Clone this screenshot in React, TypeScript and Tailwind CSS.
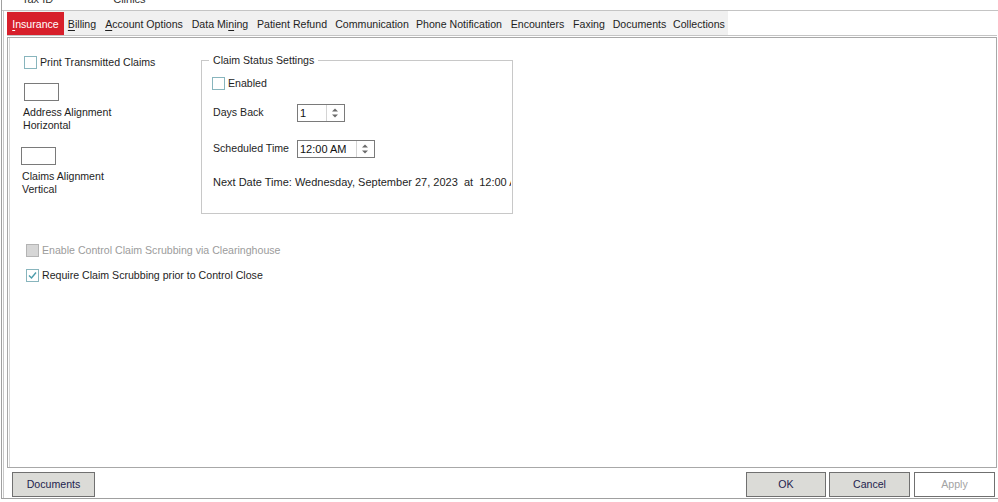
import React from "react";

const tabs = [
  { label: "Insurance", u: 0, w: "w-[57px]" },
  { label: "Billing", u: 0, w: "w-[36px]" },
  { label: "Account Options", u: 0, w: "w-[88px]" },
  { label: "Data Mining", u: 7, w: "w-[64px]" },
  { label: "Patient Refund", u: -1, w: "w-[80px]" },
  { label: "Communication", u: -1, w: "w-[80px]" },
  { label: "Phone Notification", u: -1, w: "w-[94px]" },
  { label: "Encounters", u: -1, w: "w-[63px]" },
  { label: "Faxing", u: -1, w: "w-[40px]" },
  { label: "Documents", u: -1, w: "w-[61px]" },
  { label: "Collections", u: -1, w: "w-[58px]" },
];

function Mnemonic({ label, u }: { label: string; u: number }) {
  if (u < 0) return <>{label}</>;
  return (
    <>
      {label.slice(0, u)}
      <span className="underline underline-offset-2">{label[u]}</span>
      {label.slice(u + 1)}
    </>
  );
}

function CheckBox({ checked, disabled }: { checked?: boolean; disabled?: boolean }) {
  return (
    <div
      className={
        disabled
          ? "h-[13px] w-[13px] shrink-0 border border-[#b4b4b4] bg-[#d6d6d6]"
          : "h-[13px] w-[13px] shrink-0 border border-[#88b5bd] bg-white"
      }
    >
      {checked && (
        <svg width="11" height="11" viewBox="0 0 11 11">
          <path d="M2 5.5 L4.5 8 L9 2.5" fill="none" stroke="#4b9cab" strokeWidth="1.4" />
        </svg>
      )}
    </div>
  );
}

function Spin({ value, w, sep }: { value: string; w: string; sep: string }) {
  return (
    <div className={`flex h-[18px] ${w} border border-[#7a7a7a] bg-white`}>
      <div className={`${sep} pl-[2px] text-[11px] leading-[16px] text-[#111]`}>{value}</div>
      <div className="flex-1 border-l border-[#d4d4d4]">
        <svg width="17" height="16" viewBox="0 0 17 16">
          <polygon points="5,6.5 11,6.5 8,3.5" fill="#6a6a6a" />
          <polygon points="5,9.5 11,9.5 8,12.5" fill="#6a6a6a" />
        </svg>
      </div>
    </div>
  );
}

function Btn({ label, w, disabled }: { label: string; w: string; disabled?: boolean }) {
  return (
    <div
      className={
        disabled
          ? `flex h-[25px] ${w} items-center justify-center border border-[#707070] bg-white text-[#a3a3a3]`
          : `flex h-[25px] ${w} items-center justify-center border border-[#707070] bg-[#dbdbd7] text-[#23234e]`
      }
    >
      {label}
    </div>
  );
}

export default function App() {
  return (
    <div className="h-[502px] w-[998px] overflow-hidden bg-white font-['Liberation_Sans',Arial,sans-serif] text-[10.6px] text-[#1e1e1e]">
      <div className="ml-px flex h-[499px] flex-col border-l border-b border-[#a0a0a0]">
        {/* cut-off header row */}
        <div className="relative h-[10px] overflow-hidden">
          <div className="-mt-[9px] flex text-[11px] text-[#333]">
            <span className="ml-[20px]">Tax ID</span>
            <span className="ml-[60px]">Clinics</span>
          </div>
        </div>
        <div className="h-px bg-[#c4c4c4]" />

        <div className="ml-px flex flex-1 flex-col border-l border-[#c8c8c8] pl-[3px] pr-px">
          {/* tab strip */}
          <div className="flex h-[24px]">
            <div className="flex bg-[#f0f0f0]">
              {tabs.map((t, i) => (
                <div
                  key={t.label}
                  className={
                    i === 0
                      ? `${t.w} mt-px flex items-center justify-center bg-[#d71f2b] pt-[2px] text-white`
                      : `${t.w} flex items-center justify-center pt-[3px]`
                  }
                >
                  <span>
                    <Mnemonic label={t.label} u={t.u} />
                  </span>
                </div>
              ))}
            </div>
          </div>
          <div className="h-px bg-[#c4c4c4]" />

          {/* panel */}
          <div className="mt-px h-[431px] border border-[#a8a8a8]">
            <div className="ml-px h-full border-l border-[#d8d8d8] pl-[14px]">
              <div className="flex">
                {/* left column */}
                <div className="mt-[17px] w-[177px] shrink-0">
                  <div className="flex items-center gap-[3px]">
                    <CheckBox />
                    <span>Print Transmitted Claims</span>
                  </div>
                  <div className="mt-[12px] h-[18px] w-[35px] border border-[#7a7a7a]" />
                  <div className="mt-[5px] -ml-[1px] leading-[13px]">
                    Address Alignment
                    <br />
                    Horizontal
                  </div>
                  <div className="mt-[15px] -ml-[3px] h-[18px] w-[35px] border border-[#7a7a7a]" />
                  <div className="mt-[5px] -ml-[2px] leading-[13px]">
                    Claims Alignment
                    <br />
                    Vertical
                  </div>
                </div>

                {/* group box */}
                <fieldset className="mt-[16px] h-[160px] w-[312px] border border-[#c8c8c8]">
                  <legend className="ml-[7px] px-[4px] leading-[13px]">Claim Status Settings</legend>
                  <div className="pl-[10px]">
                    <div className="mt-[9px] flex items-center gap-[3px]">
                      <CheckBox />
                      <span>Enabled</span>
                    </div>
                    <div className="mt-[12px] flex items-center">
                      <span className="w-[85px] pl-px">Days Back</span>
                      <Spin value="1" w="w-[48px]" sep="w-[30px]" />
                    </div>
                    <div className="mt-[18px] flex items-center">
                      <span className="w-[85px] pl-px">Scheduled Time</span>
                      <Spin value="12:00 AM" w="w-[78px]" sep="w-[60px]" />
                    </div>
                    <div className="mt-[18px] w-[299px] overflow-hidden whitespace-pre pl-px text-[11px] leading-[13px]">
                      Next Date Time: Wednesday, September 27, 2023  at  12:00 AM
                    </div>
                  </div>
                </fieldset>
              </div>

              <div className="mt-[29px] ml-[2px] flex items-center gap-[3px] text-[#9c9c9c]">
                <CheckBox disabled />
                <span>Enable Control Claim Scrubbing via Clearinghouse</span>
              </div>
              <div className="mt-[9px] ml-[2px] flex items-center gap-[3px]">
                <CheckBox checked />
                <span>Require Claim Scrubbing prior to Control Close</span>
              </div>
            </div>
          </div>

          {/* buttons */}
          <div className="mt-[4px] flex pl-[5px] pr-[2px]">
            <Btn label="Documents" w="w-[83px]" />
            <div className="flex-1" />
            <Btn label="OK" w="w-[80px]" />
            <div className="w-[3px]" />
            <Btn label="Cancel" w="w-[81px]" />
            <div className="w-[4px]" />
            <Btn label="Apply" w="w-[81px]" disabled />
          </div>
        </div>
      </div>
    </div>
  );
}
